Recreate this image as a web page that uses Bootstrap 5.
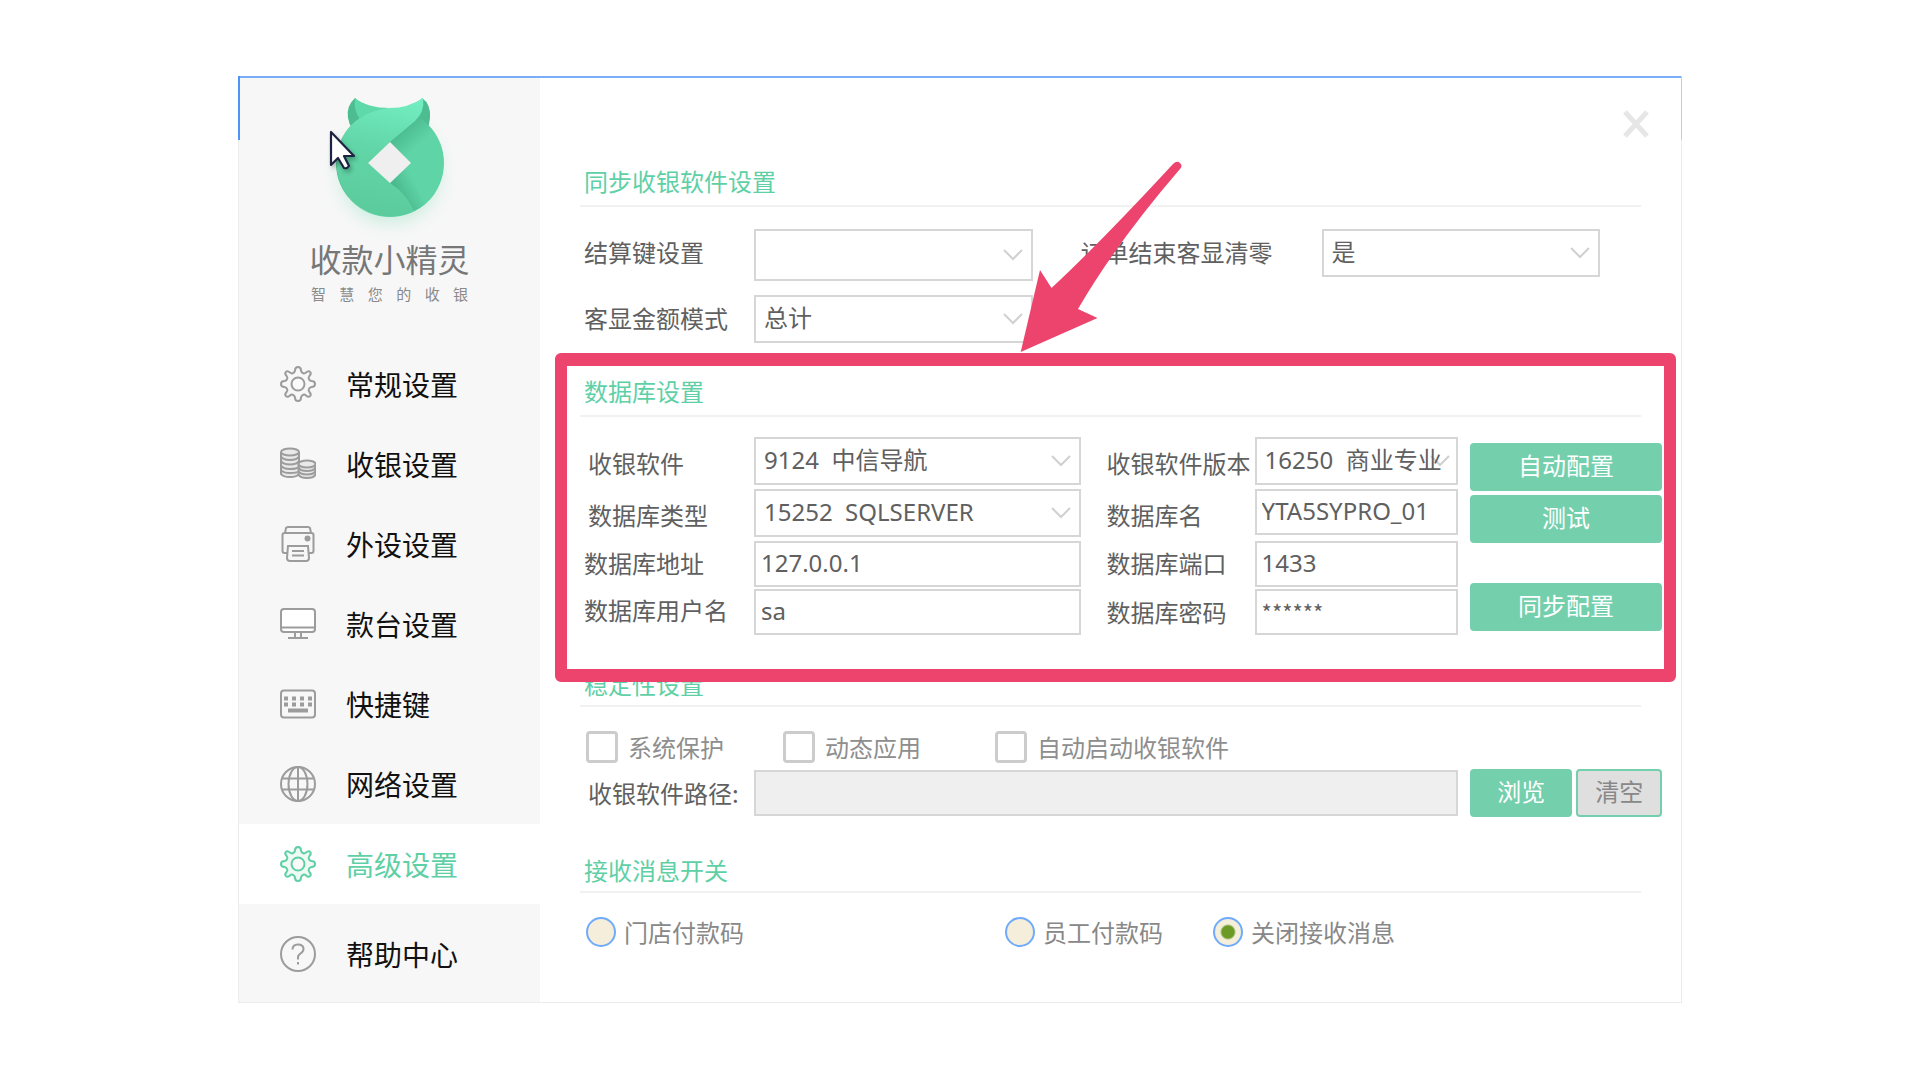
<!DOCTYPE html>
<html lang="zh-CN">
<head>
<meta charset="utf-8">
<meta name="viewport" content="width=device-width, initial-scale=1">
<title>收款小精灵 - 高级设置</title>
<link href="https://cdn.jsdelivr.net/npm/bootstrap@5.3.0/dist/css/bootstrap.min.css" rel="stylesheet">
<style>
  :root { --mint: #5fd0a6; --mint-fill: #74cfad; --rule: #f1f1f1; --edge: #d6d6d6; --ink: #606060; --alert: #ec446c; }
  body { font-family: "Noto Sans CJK SC", "Noto Sans", sans-serif; font-size: 24px; line-height: 36px; color: var(--ink); background: #fff; }
  .stage { padding: 76px 238px; }
  .shell { border: 1px solid #ececec; border-top: 2px solid #79adf8; }
  .shell::before { content: ""; position: absolute; top: -2px; left: -1px; right: -1px; height: 64px; border-left: 2px solid #4e94f7; border-right: 1px solid #b4cff6; pointer-events: none; }

  .side { width: 301px; background: #f7f7f7; }
  .brand { height: 266px; padding-top: 12px; }
  .brand-mark { width: 160px; height: 148px; }
  .brand-name { font-size: 32px; line-height: 40px; color: #777; }
  .brand-motto { font-size: 15px; line-height: 32px; color: #8a8a8a; white-space: pre; }
  .side-link { height: 80px; padding-left: 41px; gap: 30px; font-size: 28px; color: #111; text-decoration: none; }
  .side-link svg { width: 36px; height: 36px; fill: none; stroke: #9c9c9c; stroke-width: 2; }
  .side-link .coins { fill: #e9e9e9; }
  .side-link.current { background: #fff; color: var(--mint); }
  .side-link.current svg { stroke: var(--mint); fill: #effaf5; }
  .side-help { margin-top: 10px; }

  .panel { min-width: 0; padding: 30px 19px 54px 40px; }
  .close-x { width: 32px; height: 32px; margin-right: 10px; margin-bottom: 24px; }
  .close-x svg { width: 26px; height: 28px; }
  .sec-title { font-size: 24px; line-height: 34px; padding: 0 4px 7px; margin: 0 21px 0 0; color: var(--mint); border-bottom: 2px solid var(--rule); font-weight: 400; }
  .sec-title.snug { line-height: 40px; padding-bottom: 1px; }

  .field { width: 100%; height: 48px; font-family: "Noto Sans", "Noto Sans CJK SC", sans-serif; font-size: 24px; line-height: 36px; color: var(--ink); border: 2px solid var(--edge); border-radius: 0; padding: 0 5px 3px; background-color: #fff; }
  .field.form-select { padding: 0 28px 3px 8px; background-image: url("data:image/svg+xml,%3Csvg xmlns='http://www.w3.org/2000/svg' viewBox='0 0 20 12'%3E%3Cpath d='M1 1l9 9 9-9' fill='none' stroke='%23d0d0d0' stroke-width='2'/%3E%3C/svg%3E"); background-size: 20px 12px; background-position: right 8px center; }
  .field.form-select.version { padding-right: 8px; background-position: right 6px center; }
  .field.tall { height: 52px; }
  .field.low { height: 46px; }
  .field.secret { font-family: "Noto Sans CJK SC", sans-serif; font-size: 22px; }
  .field:disabled { background-color: #efefef; opacity: 1; }

  .sync-grid { display: grid; grid-template-columns: 174px 1fr 289px 1fr; row-gap: 14px; margin: 22px 62px 31px 0; }
  .sync-grid label { line-height: 46px; }
  .db-wrap { gap: 12px; margin: 20px 0 29px; }
  .db-grid { display: grid; grid-template-columns: 174px 326fr 174px 203fr; grid-template-rows: 52px 52px 48px 46px; }
  .db-grid label { align-self: center; line-height: 44px; }
  .db-grid .far { padding-left: 26px; white-space: nowrap; }
  .db-actions { width: 192px; gap: 4px; padding-top: 6px; }
  .db-actions .apart { margin-top: 36px; }

  .act { height: 48px; padding: 0 0 4px; font-size: 24px; line-height: 36px; border: 2px solid var(--mint-fill); border-radius: 4px; background: var(--mint-fill); color: #fff; }
  .act.plain { background: #dfdfdf; color: #888; }

  .checks { display: grid; grid-template-columns: 197px 212px auto; margin-top: 24px; padding-left: 6px; color: #8e8e8e; }
  .checks label, .radios label { line-height: 32px; }
  .tickbox { appearance: none; width: 32px; height: 32px; margin: 0 10px 0 0; border: 3px solid #ccc; border-radius: 4px; background: #fff; }
  .path-line { gap: 12px; margin: 6px 0 33px; }
  .path-label { width: 174px; }
  .path-actions { display: grid; grid-template-columns: 103fr 86fr; gap: 4px; width: 192px; }
  .radios { display: grid; grid-template-columns: 419fr 208fr 449fr; margin-top: 23px; padding-left: 6px; color: #888; }
  .dot { appearance: none; width: 30px; height: 30px; margin: 0 8px 0 0; border: 2px solid #6fabfa; border-radius: 50%; background: #f5eedb; }
  .dot:checked { background: radial-gradient(circle, #6b9b26 0 6px, #f5eedb 8px); }

  .callout-box { top: -21px; left: -25px; right: -14px; height: 329px; border: 13px solid var(--alert); border-left-width: 12px; border-right-width: 12px; border-radius: 6px; pointer-events: none; }
  .callout-arrow { top: -216px; left: 438px; width: 170px; height: 200px; pointer-events: none; }
  .pointer { left: 90px; top: 52px; width: 32px; height: 44px; filter: drop-shadow(2px 3px 2px #0004); }
  @media (max-width: 1500px) { .stage { padding: 24px; } }
</style>
<script src="https://cdn.jsdelivr.net/npm/bootstrap@5.3.0/dist/js/bootstrap.bundle.min.js"></script>
</head>
<body>
<svg class="d-none" aria-hidden="true">
  <symbol id="gear" viewBox="0 0 36 36">
    <path stroke-linejoin="round" d="M15 4.500Q15 1 18 1T21 4.500Q21.300 6.500 23.300 7.300Q24.600 7.800 26 6.600Q28.500 4.300 30.100 5.900T29.400 10Q28.200 11.500 28.800 12.800Q29.500 14.700 31.500 15Q35 15 35 18T31.500 21Q29.500 21.300 28.800 23.200Q28.200 24.500 29.400 26Q31.700 28.500 30.100 30.100T26 29.400Q24.600 28.200 23.300 28.700Q21.300 29.500 21 31.500Q21 35 18 35T15 31.500Q14.700 29.500 12.700 28.700Q11.400 28.200 10 29.400Q7.500 31.700 5.900 30.100T6.600 26Q7.800 24.500 7.200 23.200Q6.500 21.300 4.500 21Q1 21 1 18T4.500 15Q6.500 14.700 7.200 12.800Q7.800 11.500 6.600 10Q4.300 7.500 5.900 5.900T10 6.600Q11.400 7.800 12.700 7.300Q14.700 6.500 15 4.500Z"/>
    <circle cx="18" cy="18" r="6.500" fill="#fafafa"/>
  </symbol>
</svg>

<div class="stage">
  <div class="shell position-relative d-flex">
    <aside class="side flex-shrink-0">
      <div class="brand position-relative d-flex flex-column align-items-center">
        <svg class="brand-mark overflow-visible" viewBox="0 0 160 148" aria-hidden="true">
          <defs>
            <linearGradient id="lg1" gradientUnits="userSpaceOnUse" x1="95" y1="10" x2="70" y2="125"><stop offset="0" stop-color="#72edc0"/><stop offset=".45" stop-color="#62d6a8"/><stop offset="1" stop-color="#5bcb9c"/></linearGradient>
            <linearGradient id="lg2" gradientUnits="userSpaceOnUse" x1="86" y1="36" x2="106" y2="58"><stop offset="0" stop-color="#45b487"/><stop offset="1" stop-color="#5fd4a7"/></linearGradient>
            <linearGradient id="lg3" gradientUnits="userSpaceOnUse" x1="90" y1="108" x2="108" y2="98"><stop offset="0" stop-color="#49b88b"/><stop offset="1" stop-color="#5fd4a7"/></linearGradient>
            <filter id="soft" x="-40%" y="-40%" width="180%" height="180%"><feGaussianBlur stdDeviation="9"/></filter>
          </defs>
          <circle cx="80" cy="83" r="50" fill="#8fe0c0" opacity=".45" filter="url(#soft)"/>
          <path d="M45 8Q36 16 38 28Q39 34 42 38L62 26Z" fill="#4dbc91"/>
          <path d="M112 8Q121 14 120 28L118 40L98 30Z" fill="#4dbc91"/>
          <path d="M45 8Q57 18 80 18L64 22Q54 27 51 31Q43 20 45 8Z" fill="#5ed9aa"/>
          <circle cx="80" cy="73" r="54" fill="url(#lg2)"/>
          <path d="M80 93L101 73L120 73L125 103Q116 116 104 121Z" fill="url(#lg3)"/>
          <path d="M113 8Q115 22 105 31L80 52L58 73L80 93Q96 103 104 121A54 54 0 1 1 64 21Q72 19 80 18Q98 18 113 8Z" fill="url(#lg1)"/>
          <path d="M80 52L101 73L80 93L58 73Z" fill="#efefef"/>
        </svg>
        <svg class="pointer position-absolute" viewBox="0 0 32 44" aria-hidden="true"><path d="M2 2V35L9 28L15 38Q18 39 20 36L15 26H25Z" fill="#fff" stroke="#1d2340" stroke-width="2.200" stroke-linejoin="round"/></svg>
        <div class="brand-name">收款小精灵</div>
        <div class="brand-motto">智    慧    您    的    收    银</div>
      </div>
      <nav class="d-flex flex-column">
        <a href="#" class="side-link d-flex align-items-center"><svg><use href="#gear"/></svg>常规设置</a>
        <a href="#" class="side-link d-flex align-items-center"><svg class="coins" viewBox="0 0 36 36"><path d="M1 6V28Q3 31 10 31T19 28V6"/><ellipse cx="10" cy="6" rx="9" ry="3.500"/><path fill="none" d="M1 10.500Q3 14 10 14T19 10.500M1 15Q3 18.500 10 18.500T19 15M1 19.500Q3 23 10 23T18 21M1 24Q3 27 10 27T18 25.500"/><path d="M18.500 18V28.500Q20 32 27 32T35.500 28.500V18"/><ellipse cx="27" cy="18" rx="8.500" ry="3.500"/><path fill="none" d="M18.500 21.500Q20 25 27 25T35.500 21.500M18.500 25Q20 28.500 27 28.500T35.500 25"/></svg>收银设置</a>
        <a href="#" class="side-link d-flex align-items-center"><svg viewBox="0 0 36 36"><path d="M5 7L6 2Q6.500 1 8 1H28Q29.500 1 30 2L31 7M8 27H4.500Q2.500 27 2.500 25V9Q2.500 7 4.500 7H31.500Q33.500 7 33.500 9V25Q33.500 27 31.500 27H28M8 20H28L29 32Q29 35 26 35H10Q7 35 7 32ZM12 25H24M12 29.500H24"/><circle cx="27.500" cy="12.500" r="2" fill="#9c9c9c"/></svg>外设设置</a>
        <a href="#" class="side-link d-flex align-items-center"><svg viewBox="0 0 36 36"><rect x="1" y="3" width="34" height="23" rx="3" fill="#fff"/><path d="M1 21.500H35M15 26V31M21 26V31M8 32H28"/></svg>款台设置</a>
        <a href="#" class="side-link d-flex align-items-center"><svg viewBox="0 0 36 36"><rect x="1" y="4.500" width="34" height="27" rx="3"/><path d="M4 12.500H32M4 18.500H32" stroke-width="4" stroke-dasharray="4 4"/><path d="M8 24.500H28" stroke-width="4"/></svg>快捷键</a>
        <a href="#" class="side-link d-flex align-items-center"><svg viewBox="0 0 36 36"><circle cx="18" cy="18" r="17"/><ellipse cx="18" cy="18" rx="9.500" ry="17"/><path d="M18 1V35M2.500 12.500H33.500M2.500 23.500H33.500"/></svg>网络设置</a>
        <a href="#" class="side-link current d-flex align-items-center" aria-current="page"><svg><use href="#gear"/></svg>高级设置</a>
        <a href="#" class="side-link side-help d-flex align-items-center"><svg viewBox="0 0 36 36"><circle cx="18" cy="18" r="17"/><path d="M12.500 13.500Q12.500 8.500 18 8.500T23.500 13Q23.500 15.500 20.500 17.500T18 22V23.500M18 26V28.500" stroke-width="2"/></svg>帮助中心</a>
      </nav>
    </aside>

    <main class="panel flex-grow-1 d-flex flex-column">
      <button type="button" class="close-x btn p-0 border-0 align-self-end d-flex align-items-center justify-content-center" aria-label="关闭"><svg viewBox="0 0 26 28" fill="none" stroke="#e6e6e6" stroke-width="5"><path d="M2 2L24 26M24 2L2 26"/></svg></button>

      <section>
        <h2 class="sec-title">同步收银软件设置</h2>
        <div class="sync-grid">
          <label class="ps-1" for="key">结算键设置</label>
          <select id="key" class="form-select field tall"><option></option></select>
          <label class="ps-5" for="clear">订单结束客显清零</label>
          <select id="clear" class="form-select field"><option>是</option></select>
          <label class="ps-1" for="mode">客显金额模式</label>
          <select id="mode" class="form-select field"><option>总计</option></select>
        </div>
      </section>

      <section class="position-relative">
        <h2 class="sec-title">数据库设置</h2>
        <div class="db-wrap d-flex">
          <div class="db-grid flex-grow-1">
            <label class="ps-2" for="soft-name">收银软件</label>
            <select id="soft-name" class="form-select field"><option>9124&nbsp;&nbsp;中信导航</option></select>
            <label class="far" for="ver">收银软件版本</label>
            <select id="ver" class="form-select field version"><option>16250&nbsp;&nbsp;商业专业</option></select>
            <label class="ps-2" for="db-type">数据库类型</label>
            <select id="db-type" class="form-select field"><option>15252&nbsp;&nbsp;SQLSERVER</option></select>
            <label class="far" for="db-name">数据库名</label>
            <input id="db-name" class="field low" value="YTA5SYPRO_01">
            <label class="ps-1 mb-1" for="db-host">数据库地址</label>
            <input id="db-host" class="field low" value="127.0.0.1">
            <label class="far mb-1" for="db-port">数据库端口</label>
            <input id="db-port" class="field low" value="1433">
            <label class="ps-1 mb-1" for="db-user">数据库用户名</label>
            <input id="db-user" class="field low" value="sa">
            <label class="far" for="db-pass">数据库密码</label>
            <input id="db-pass" class="field low secret" value="******">
          </div>
          <div class="db-actions d-flex flex-column flex-shrink-0">
            <button type="button" class="btn act">自动配置</button>
            <button type="button" class="btn act">测试</button>
            <button type="button" class="btn act apart">同步配置</button>
          </div>
        </div>
        <div class="callout-box position-absolute z-1"></div>
        <svg class="callout-arrow position-absolute z-1" viewBox="1018 158 170 200" aria-hidden="true"><path d="M1020.700 352L1040 270L1051.500 288Q1100 243 1173 164Q1177 160 1180 163T1180 169Q1117 242 1078 309L1097.500 318Z" fill="#ec446c"/></svg>
      </section>

      <section>
        <h2 class="sec-title snug">稳定性设置</h2>
        <div class="checks">
          <label class="d-flex align-items-center"><input type="checkbox" class="tickbox">系统保护</label>
          <label class="d-flex align-items-center"><input type="checkbox" class="tickbox">动态应用</label>
          <label class="d-flex align-items-center"><input type="checkbox" class="tickbox">自动启动收银软件</label>
        </div>
        <div class="path-line d-flex">
          <div class="d-flex flex-grow-1 align-items-center">
            <label class="path-label ps-2 flex-shrink-0" for="path">收银软件路径:</label>
            <input id="path" class="field low" disabled>
          </div>
          <div class="path-actions flex-shrink-0">
            <button type="button" class="btn act">浏览</button>
            <button type="button" class="btn act plain">清空</button>
          </div>
        </div>
      </section>

      <section>
        <h2 class="sec-title snug">接收消息开关</h2>
        <div class="radios">
          <label class="d-flex align-items-center"><input type="radio" name="msg" class="dot">门店付款码</label>
          <label class="d-flex align-items-center"><input type="radio" name="msg" class="dot">员工付款码</label>
          <label class="d-flex align-items-center"><input type="radio" name="msg" class="dot" checked>关闭接收消息</label>
        </div>
      </section>
    </main>
  </div>
</div>
</body>
</html>
